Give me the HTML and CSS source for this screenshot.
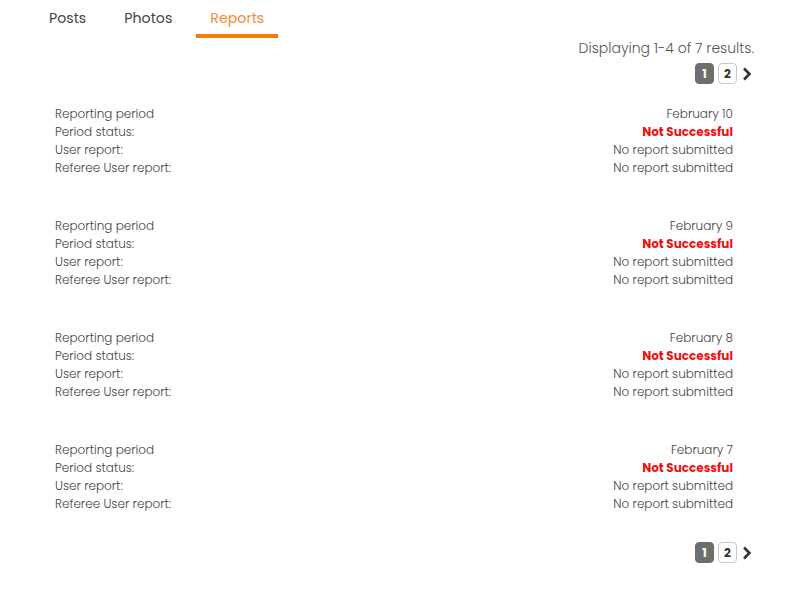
FILE: index.html
```html
<!DOCTYPE html>
<html>
<head>
<meta charset="utf-8">
<link rel="stylesheet" href="styles.css">
</head>
<body>
<nav class="tabs">
  <a class="tab">Posts</a>
  <a class="tab">Photos</a>
  <a class="tab active">Reports</a>
</nav>
<div class="summary">Displaying 1-4 of 7 results.</div>
<div class="pager">
  <span class="page current">1</span>
  <span class="page">2</span>
  <span class="next"><svg width="10" height="14" viewBox="0 0 10 14"><path d="M2 1.5 L7.5 7 L2 12.5" fill="none" stroke="#333" stroke-width="2.6"/></svg></span>
</div>
<div class="reports">
  <div class="report">
    <div class="row"><span>Reporting period</span><span>February 10</span></div>
    <div class="row"><span>Period status:</span><span class="fail">Not Successful</span></div>
    <div class="row"><span>User report:</span><span>No report submitted</span></div>
    <div class="row"><span>Referee User report:</span><span>No report submitted</span></div>
  </div>
  <div class="report">
    <div class="row"><span>Reporting period</span><span>February 9</span></div>
    <div class="row"><span>Period status:</span><span class="fail">Not Successful</span></div>
    <div class="row"><span>User report:</span><span>No report submitted</span></div>
    <div class="row"><span>Referee User report:</span><span>No report submitted</span></div>
  </div>
  <div class="report">
    <div class="row"><span>Reporting period</span><span>February 8</span></div>
    <div class="row"><span>Period status:</span><span class="fail">Not Successful</span></div>
    <div class="row"><span>User report:</span><span>No report submitted</span></div>
    <div class="row"><span>Referee User report:</span><span>No report submitted</span></div>
  </div>
  <div class="report">
    <div class="row"><span>Reporting period</span><span>February 7</span></div>
    <div class="row"><span>Period status:</span><span class="fail">Not Successful</span></div>
    <div class="row"><span>User report:</span><span>No report submitted</span></div>
    <div class="row"><span>Referee User report:</span><span>No report submitted</span></div>
  </div>
</div>
<div class="pager bottom">
  <span class="page current">1</span>
  <span class="page">2</span>
  <span class="next"><svg width="10" height="14" viewBox="0 0 10 14"><path d="M2 1.5 L7.5 7 L2 12.5" fill="none" stroke="#333" stroke-width="2.6"/></svg></span>
</div>
</body>
</html>
```
FILE: styles.css
```css
html, body {
  margin: 0;
  padding: 0;
  background: #fff;
}
body {
  font-family: "Poppins", "Open Sans", "Noto Sans", sans-serif;
  color: #555;
  width: 800px;
}
.tabs {
  display: flex;
  gap: 10px;
  padding-left: 35px;
}
.tab {
  display: block;
  padding: 7px 14px 5px;
  font-size: 14.2px;
  line-height: 22px;
  color: #444;
  border-bottom: 4px solid transparent;
}
.tab.active {
  color: #f58a3a;
  border-bottom-color: #f57c10;
}
.summary {
  text-align: right;
  padding-right: 46px;
  font-size: 14px;
  font-weight: 300;
  line-height: 20px;
  margin-top: 0;
  color: #555;
}
.pager {
  display: flex;
  justify-content: flex-end;
  align-items: center;
  gap: 4px;
  padding-right: 48px;
  margin-top: 5px;
}
.page {
  width: 19px;
  height: 21px;
  box-sizing: border-box;
  border: 1px solid #c8c8c8;
  border-radius: 4px;
  display: flex;
  align-items: center;
  justify-content: center;
  font-size: 12px;
  font-weight: 700;
  color: #333;
  background: #fff;
}
.page.current {
  background: #6e6e6e;
  border-color: #6e6e6e;
  color: #fff;
}
.next {
  display: flex;
  align-items: center;
  margin-left: 1px;
}
.reports {
  padding: 21px 67px 0 55px;
  display: flex;
  flex-direction: column;
  gap: 40px;
}
.row {
  display: flex;
  justify-content: space-between;
  font-size: 12px;
  font-weight: 300;
  line-height: 18px;
  color: #444;
}
.fail {
  color: #ee1111;
  font-weight: 700;
}
.pager.bottom {
  margin-top: 29px;
}
```
